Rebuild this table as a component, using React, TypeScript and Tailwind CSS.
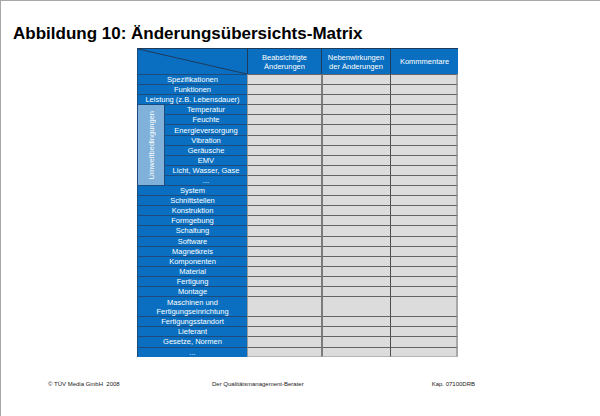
import React from "react";

const FONT = { fontFamily: '"Liberation Sans", Arial, sans-serif' };

type RowProps = { label?: React.ReactNode; tall?: boolean; indent?: boolean; last?: boolean };

function Row({ label, tall, indent, last }: RowProps) {
  const h = tall ? "h-[20.2px]" : "h-[10.1px]";
  const bottom = last ? "border-b border-b-[#b4b4b4]" : "";
  return (
    <div className={`flex ${h}`}>
      <div
        className={`${indent ? "w-[82px]" : "w-[109px]"} shrink-0 border-t border-[#1d4b7e] bg-[#0a6fc0] text-white text-[7.5px] leading-[9px] text-center flex items-center justify-center whitespace-nowrap`}
      >
        {label}
      </div>
      <div className={`w-[74px] shrink-0 border-t border-l border-t-[#646464] border-l-[#9c9c9c] bg-[#dcdcdc] ${bottom}`} />
      <div className={`w-[69px] shrink-0 border-t border-l-2 border-t-[#646464] border-l-[#7c7c7c] bg-[#dcdcdc] ${bottom}`} />
      <div className={`w-[68px] shrink-0 border-t border-l border-r-2 border-t-[#646464] border-l-[#4e4e4e] border-r-[#a8a8a8] bg-[#dcdcdc] ${bottom}`} />
    </div>
  );
}

const topRows = ["Spezifikationen", "Funktionen", "Leistung (z.B. Lebensdauer)"];
const envRows = [
  "Temperatur",
  "Feuchte",
  "Energieversorgung",
  "Vibration",
  "Geräusche",
  "EMV",
  "Licht, Wasser, Gase",
  "...",
];
const midRows = [
  "System",
  "Schnittstellen",
  "Konstruktion",
  "Formgebung",
  "Schaltung",
  "Software",
  "Magnetkreis",
  "Komponenten",
  "Material",
  "Fertigung",
  "Montage",
];
const endRows = ["Fertigungsstandort", "Lieferant", "Gesetze, Normen"];

export default function App() {
  return (
    <div
      className="w-[600px] h-[416px] bg-white border-t border-l border-[#a8a8a8] overflow-hidden text-black"
      style={FONT}
    >
      <div className="mt-[24px] ml-[12px] text-[17px] leading-[17px] font-bold whitespace-nowrap">
        Abbildung 10: Änderungsübersichts-Matrix
      </div>

      <div className="mt-[6px] ml-[136px] w-[321px] border-l border-[#1d4b7e]">
        {/* header */}
        <div className="flex h-[26px] border-t border-[#1f3b5c] bg-[#0a6fc0] text-white text-[7.5px] leading-[9px] text-center">
          <div className="relative w-[109px] shrink-0">
            <svg className="absolute inset-0" width="109" height="25" viewBox="0 0 109 25">
              <line x1="0" y1="0" x2="109" y2="25" stroke="#1f3552" strokeWidth="0.9" />
            </svg>
          </div>
          <div className="w-[74px] shrink-0 border-l border-[#1f3b5c] flex items-center justify-center">
            <div>
              Beabsichtigte
              <br />
              Änderungen
            </div>
          </div>
          <div className="w-[69px] shrink-0 border-l border-[#1f3b5c] flex items-center justify-center">
            <div>
              Nebenwirkungen
              <br />
              der Änderungen
            </div>
          </div>
          <div className="w-[68px] shrink-0 border-l border-[#1f3b5c] flex items-center justify-center">
            Kommmentare
          </div>
        </div>

        {topRows.map((r) => (
          <Row key={r} label={r} />
        ))}

        <div className="flex">
          <div className="w-[27px] shrink-0 border-t border-r border-[#1d4b7e] bg-[#80b1da] flex items-center justify-center">
            <span className="[writing-mode:vertical-rl] rotate-180 text-white text-[7.5px] leading-[9px] whitespace-nowrap">
              Umweltbedingungen
            </span>
          </div>
          <div className="flex flex-col">
            {envRows.map((r, i) => (
              <Row key={i} label={r} indent />
            ))}
          </div>
        </div>

        {midRows.map((r) => (
          <Row key={r} label={r} />
        ))}
        <Row
          tall
          label={
            <div>
              Maschinen und
              <br />
              Fertigungseinrichtung
            </div>
          }
        />
        {endRows.map((r) => (
          <Row key={r} label={r} />
        ))}
        <Row label="..." last />
      </div>

      <div className="mt-[23px] flex pl-[47px] text-[6px] leading-[8px] text-[#222] whitespace-pre">
        <div className="w-[164px] shrink-0">© TÜV Media GmbH  2008</div>
        <div className="w-[90px] shrink-0 text-center">Der Qualitätsmanagement-Berater</div>
        <div className="w-[173px] shrink-0 text-right">Kap. 07100DRB</div>
      </div>
    </div>
  );
}
